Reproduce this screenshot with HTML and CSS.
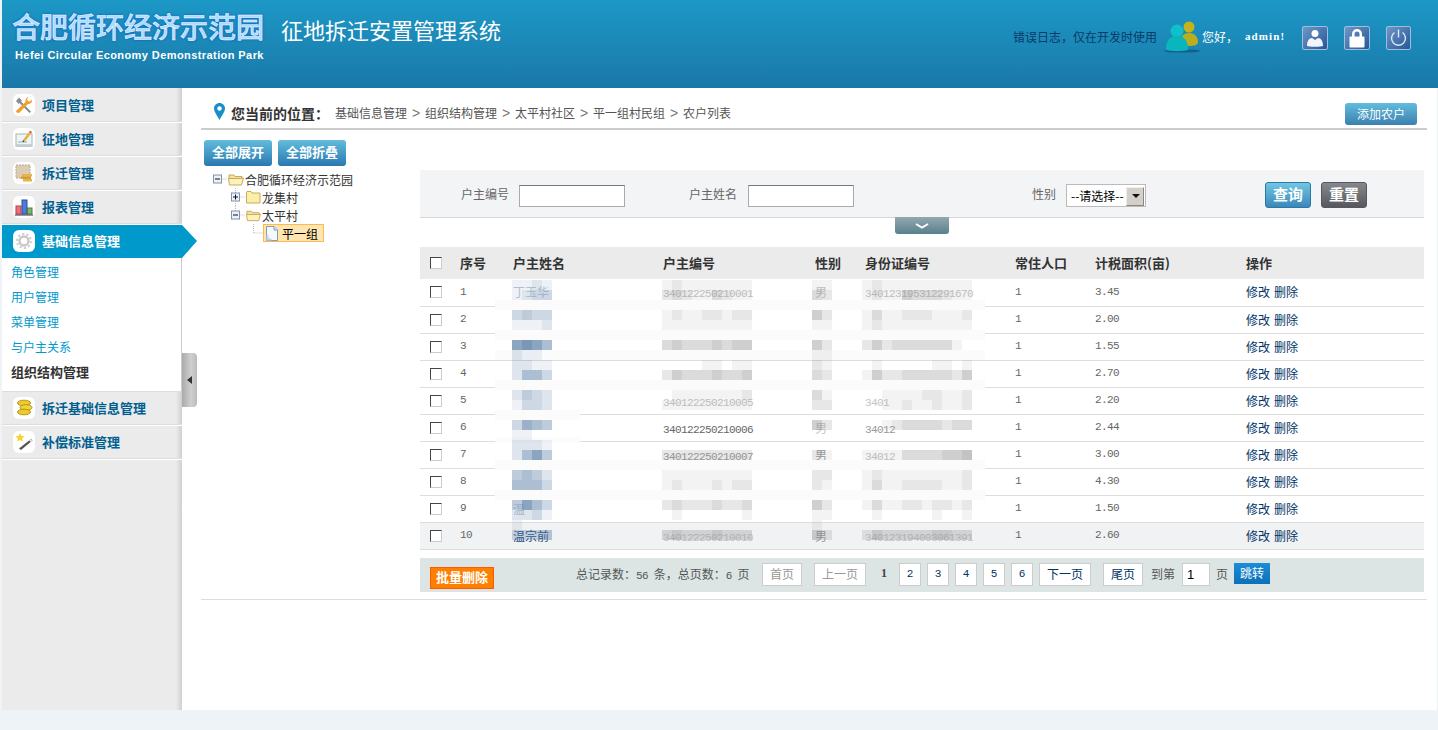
FILE: index.html
```html
<!DOCTYPE html>
<html>
<head>
    <meta charset="utf-8">
    <title>征地拆迁安置管理系统</title>
    <link rel="stylesheet" href="styles.css">
</head>
<body>
    <div class="header">
        <div class="logo">
            <div class="logo-cn">合肥循环经济示范园</div>
            <div class="logo-en">Hefei Circular Economy Demonstration Park</div>
        </div>
        <div class="sys-title">征地拆迁安置管理系统</div>
        <div class="user-bar">
            <span class="err-log">错误日志，仅在开发时使用</span>
            <svg class="avatar" width="37" height="36" viewBox="0 0 37 36">
                <ellipse cx="19" cy="32" rx="18" ry="1.6" fill="#11608a"/>
                <circle cx="26" cy="8" r="5.5" fill="#c4b41c"/>
                <path d="M17 25c0-7 3-11 9-11s9 4 9 9c0 3-4 4-9 4z" fill="#b8ae1f"/>
                <circle cx="14" cy="12" r="6.5" fill="#10c0c8"/>
                <path d="M3 31c0-10 4-14 11-14s11 4 11 14c-5 1.500-17 1.500-22 0z" fill="#0bb5bd"/>
            </svg>
            <span class="hello">您好，</span>
            <b class="uname">admin!</b>
            <a class="icon-btn">
                <svg width="24" height="22" viewBox="0 0 24 22"><circle cx="12" cy="6.500" r="3.500" fill="#fff"/><path d="M4 19c0-5 2-8 5-8l3 2 3-2c3 0 5 3 5 8-2 1-14 1-16 0z" fill="#f2f5fa"/></svg>
            </a>
            <a class="icon-btn">
                <svg width="24" height="22" viewBox="0 0 24 22"><path d="M7 10V7a5 5 0 0 1 10 0v3h-2.500V7a2.500 2.500 0 0 0-5 0v3z" fill="#fff"/><rect x="4.500" y="9.500" width="15" height="11" rx="1" fill="#fff"/></svg>
            </a>
            <a class="icon-btn power">
                <svg width="23" height="22" viewBox="0 0 23 22" fill="none" stroke="#dfe9f5" stroke-width="1.400"><path d="M7.500 5.500a7 7 0 1 0 8 0"/><path d="M11.500 2.500v8"/></svg>
            </a>
        </div>
    </div>

    <div class="layout">
        <div class="side">
            <div class="menu-item">
                <span class="menu-icon">
                    <svg width="18" height="18" viewBox="0 0 18 18"><path d="M4 1.500l3 3-1 1 10 10-1.500 1.500-10-10-1 1-2.500-3z" fill="#8a8f94"/><path d="M13.500 1l-1.500 2.500 1 1.500 2 .5L17 3.500c.5 3-2 5-4 4.500L4 17l-2.500-.5L1 15l9.500-9c-.5-2 1-5 3-5z" fill="#f0a030"/></svg>
                </span>项目管理
            </div>
            <div class="menu-item">
                <span class="menu-icon">
                    <svg width="18" height="18" viewBox="0 0 18 18"><rect x="1" y="4" width="16" height="11" fill="#eef3f4" stroke="#a8b4b8"/><path d="M3 12h9" stroke="#8fb2c4"/><path d="M1 15l-1 2h18l-1-2z" fill="#c4ccd0"/><path d="M8 10l6-8 2 1.500-6 8z" fill="#e8b33c"/><path d="M14 2l1-1.500 2 1.500-1 1.500z" fill="#d8504c"/><path d="M8 10l-.5 2 2-.5z" fill="#222"/></svg>
                </span>征地管理
            </div>
            <div class="menu-item">
                <span class="menu-icon">
                    <svg width="18" height="18" viewBox="0 0 18 18"><rect x="1" y="1" width="14" height="13" fill="#dcccb4" stroke="#b8a88e" stroke-dasharray="2 1"/><rect x="7" y="10" width="10" height="2.500" fill="#e6b44a"/><rect x="6" y="12.500" width="10" height="2.500" fill="#d69e30"/><rect x="8" y="15" width="9" height="2.500" fill="#e6b44a"/></svg>
                </span>拆迁管理
            </div>
            <div class="menu-item">
                <span class="menu-icon">
                    <svg width="18" height="18" viewBox="0 0 18 18"><rect x="1" y="8" width="5" height="8" fill="#ee7078" stroke="#b84048"/><rect x="7" y="2" width="5" height="14" fill="#4c7cd8" stroke="#2c4ca0"/><rect x="12.500" y="10" width="4.500" height="6" fill="#80b468" stroke="#4c8040"/><path d="M0 17h18" stroke="#333"/></svg>
                </span>报表管理
            </div>
            <div class="menu-item active">
                <span class="menu-icon">
                    <svg width="18" height="18" viewBox="0 0 18 18"><circle cx="9" cy="9" r="4.500" fill="none" stroke="#c8c8c8" stroke-width="2.500"/><circle cx="9" cy="9" r="7" fill="none" stroke="#d0d0d0" stroke-width="2" stroke-dasharray="2.300 2.100"/></svg>
                </span>基础信息管理
            </div>
            <div class="submenu">
                <a>角色管理</a>
                <a>用户管理</a>
                <a>菜单管理</a>
                <a>与户主关系</a>
                <a class="current">组织结构管理</a>
            </div>
            <div class="menu-item">
                <span class="menu-icon">
                    <svg width="18" height="18" viewBox="0 0 18 18"><ellipse cx="9" cy="4" rx="6.500" ry="2.800" fill="#eecb2c" stroke="#b89414"/><ellipse cx="11" cy="8.500" rx="6" ry="2.800" fill="#f2d436" stroke="#b89414"/><ellipse cx="9" cy="13" rx="6.500" ry="2.800" fill="#eecb2c" stroke="#b89414"/></svg>
                </span>拆迁基础信息管理
            </div>
            <div class="menu-item">
                <span class="menu-icon">
                    <svg width="18" height="18" viewBox="0 0 18 18"><path d="M5 0l1.300 3 3.200.3-2.400 2.100.7 3.100L5 6.900 2.200 8.500l.7-3.100L.5 3.300 3.700 3z" fill="#f6d22c"/><path d="M16 6l1.500 1.500L6 17l-2-1.500z" fill="#555"/><path d="M14 7.500l2 1.700 1.500-1.700L16 6z" fill="#ddd"/></svg>
                </span>补偿标准管理
            </div>
            <div class="side-handle"></div>
        </div>

        <div class="main">
            <div class="crumb-bar">
                <svg class="pin" width="11" height="17" viewBox="0 0 11 17"><path d="M5.500 0C2.500 0 0 2.400 0 5.500 0 9 3.500 13 5.500 17c2-4 5.500-8 5.500-11.500C11 2.400 8.500 0 5.500 0z" fill="#1a8ecb"/><circle cx="5.500" cy="5.500" r="2.200" fill="#fff"/></svg>
                <span class="crumb-label">您当前的位置：</span>
                <span class="crumbs">基础信息管理<i>&gt;</i>组织结构管理<i>&gt;</i>太平村社区<i>&gt;</i>平一组村民组<i>&gt;</i>农户列表</span>
                <a class="btn-add">添加农户</a>
            </div>

            <div class="content">
                <div class="tree-col">
                    <div class="tree-btns">
                        <a class="btn-blue">全部展开</a>
                        <a class="btn-blue">全部折叠</a>
                    </div>
                    <ul class="tree">
                        <li class="tree-row">
                            <svg width="18" height="18" viewBox="0 0 18 18"><path d="M13.500 9H19" stroke="#bbb" stroke-dasharray="1 1"/><rect x="4.500" y="5" width="8" height="8" fill="#eef1f5" stroke="#7d95b0"/><path d="M6 9h5" stroke="#111"/></svg>
                            <svg class="folder" width="16" height="14" viewBox="0 0 16 14"><path d="M1 3h5l1 1.500h7v2H1z" fill="#f4e2a0" stroke="#c9a85c"/><path d="M.5 6.500h12l3-.5-2 7H1.500z" fill="#fdf2bd" stroke="#c9a85c"/></svg>
                            <span>合肥循环经济示范园</span>
                        </li>
                        <li class="tree-row lv1">
                            <svg width="18" height="18" viewBox="0 0 18 18"><path d="M8.500 0v5M8.500 13v5" stroke="#bbb" stroke-dasharray="1 1"/><path d="M13.500 9H19" stroke="#bbb" stroke-dasharray="1 1"/><rect x="4.500" y="5" width="8" height="8" fill="#eef1f5" stroke="#7d95b0"/><path d="M6 9h5M8.500 6.500v5" stroke="#111"/></svg>
                            <svg class="folder" width="15" height="14" viewBox="0 0 15 14"><path d="M.5 2.500l.5-1h4l1 1.500h8v10H.5z" fill="#fbeea8" stroke="#c9a85c"/></svg>
                            <span>龙集村</span>
                        </li>
                        <li class="tree-row lv1">
                            <svg width="18" height="18" viewBox="0 0 18 18"><path d="M8.500 0v5" stroke="#bbb" stroke-dasharray="1 1"/><path d="M13.500 9H19" stroke="#bbb" stroke-dasharray="1 1"/><rect x="4.500" y="5" width="8" height="8" fill="#eef1f5" stroke="#7d95b0"/><path d="M6 9h5" stroke="#111"/></svg>
                            <svg class="folder" width="15" height="14" viewBox="0 0 16 14"><path d="M1 3h5l1 1.500h7v2H1z" fill="#f4e2a0" stroke="#c9a85c"/><path d="M.5 6.500h12l3-.5-2 7H1.500z" fill="#fdf2bd" stroke="#c9a85c"/></svg>
                            <span>太平村</span>
                        </li>
                        <li class="tree-row lv2">
                            <svg width="18" height="18" viewBox="0 0 18 18"><path d="M8.500 0v9H18" fill="none" stroke="#bbb" stroke-dasharray="1 1"/></svg>
                            <span class="leaf">
                                <svg width="12" height="15" viewBox="0 0 12 15"><path d="M.5.500h7.500l3.500 3.500v10.500H.5z" fill="#f6f9fd" stroke="#7f9cc4"/><path d="M8 .5v3.500h3.500" fill="#dbe6f4" stroke="#7f9cc4"/><path d="M1.500 9v4.500h4" fill="none" stroke="#c4d4ec" stroke-width="2"/></svg>
                                <span>平一组</span>
                            </span>
                        </li>
                    </ul>
                </div>

                <div class="list-col">
                    <div class="search-bar">
                        <label class="f1">户主编号</label>
                        <input class="txt" type="text">
                        <label class="f2">户主姓名</label>
                        <input class="txt" type="text">
                        <label class="f3">性别</label>
                        <span class="sel-wrap">
                            <select class="sel"><option>--请选择--</option><option>男</option><option>女</option></select>
                        </span>
                        <a class="btn-query">查询</a>
                        <a class="btn-reset">重置</a>
                    </div>
                    <a class="search-toggle">
                        <svg width="14" height="6" viewBox="0 0 14 6"><path d="M1 1l6 3.500 6-3.500" fill="none" stroke="#fff" stroke-width="2"/></svg>
                    </a>

                    <div class="table-wrap">
                        <table class="grid">
                            <colgroup>
                                <col class="c-check"><col class="c-no"><col class="c-name"><col class="c-code"><col class="c-sex"><col class="c-id"><col class="c-pop"><col class="c-area"><col class="c-op">
                            </colgroup>
                            <thead>
                                <tr>
                                    <th><input class="chk" type="checkbox"></th>
                                    <th>序号</th>
                                    <th>户主姓名</th>
                                    <th>户主编号</th>
                                    <th>性别</th>
                                    <th>身份证编号</th>
                                    <th>常住人口</th>
                                    <th>计税面积(亩)</th>
                                    <th>操作</th>
                                </tr>
                            </thead>
                            <tbody id="rows"></tbody>
                        </table>
                        <svg id="mosaic" class="mosaic" width="1004" height="302"></svg>
                    </div>

                    <div class="pager">
                        <a class="btn-batch">批量删除</a>
                        <span class="pager-info">总记录数：<em>56</em> 条，总页数：<em>6</em> 页</span>
                        <a class="pg off pg-first">首页</a>
                        <a class="pg off pg-prev">上一页</a>
                        <b class="pg-cur">1</b>
                        <a class="pg num">2</a>
                        <a class="pg num">3</a>
                        <a class="pg num">4</a>
                        <a class="pg num">5</a>
                        <a class="pg num">6</a>
                        <a class="pg pg-next">下一页</a>
                        <a class="pg pg-last">尾页</a>
                        <span class="pg-to">到第</span>
                        <input class="pg-input" type="text" value="1">
                        <span class="pg-unit">页</span>
                        <a class="pg-go">跳转</a>
                    </div>
                </div>
            </div>
        </div>
    </div>

    <script src="app.js"></script>
</body>
</html>
```

FILE: styles.css
```css
* {
    box-sizing: border-box;
}

body {
    margin: 0;
    padding-left: 2px;
    height: 730px;
    overflow: hidden;
    background-color: #eef3f8;
    font-family: "Noto Sans CJK SC", "Liberation Sans", sans-serif;
    font-size: 12px;
    color: #555;
}

a {
    cursor: pointer;
}

/* header */
.header {
    display: flex;
    height: 88px;
    background: linear-gradient(to bottom, #1c98c6, #1a78a8);
    color: #fff;
}

.logo {
    width: 279px;
    padding: 8px 0 0 10px;
}

.logo-cn {
    font-size: 28px;
    font-weight: 500;
    line-height: 36px;
    color: #a6dcff;
    -webkit-text-stroke: 0.5px #fff;
    text-shadow: 0 0 3px #0f5fc8, 0 0 2px #0f5fc8;
    white-space: nowrap;
}

.logo-en {
    margin-top: 3px;
    padding-left: 3px;
    font-family: "Liberation Sans", sans-serif;
    font-size: 11px;
    font-weight: bold;
    letter-spacing: 0.42px;
    line-height: 16px;
    white-space: nowrap;
}

.sys-title {
    padding-top: 14px;
    font-size: 22px;
    line-height: 30px;
    white-space: nowrap;
}

.user-bar {
    display: flex;
    align-items: center;
    height: 36px;
    margin: 18px 27px 0 auto;
}

.err-log {
    width: 150px;
    color: #0a3a68;
}

.avatar {
    display: block;
    margin-right: 2px;
    margin-top: 2px;
}

.hello {
    width: 43px;
}

.uname {
    width: 57px;
    font-family: "Liberation Serif", serif;
    font-size: 11px;
    letter-spacing: 1.1px;
}

.icon-btn {
    display: block;
    width: 26px;
    height: 24px;
    margin-right: 16px;
    margin-top: 4px;
    border: 1px solid #9cc0dc;
    border-radius: 2px;
    background: linear-gradient(135deg, #6f97c6, #26579a);
}

.icon-btn svg {
    display: block;
}

.icon-btn.power {
    width: 25px;
    margin-right: 0;
}

/* page frame */
.layout {
    display: flex;
    height: 622px;
}

.side {
    position: relative;
    width: 180px;
    padding-top: 1px;
    background: linear-gradient(to right, #ebebeb 174px, #cfcfcf 180px);
}

.menu-item {
    display: flex;
    align-items: flex-start;
    height: 34px;
    padding: 5px 0 0 11px;
    border-bottom: 1px solid #fff;
    box-shadow: inset 0 -1px 0 #dcdcdc;
    font-size: 13px;
    font-weight: bold;
    line-height: 22px;
    color: #005f8f;
}

.menu-icon {
    display: block;
    width: 22px;
    height: 22px;
    margin-right: 7px;
    padding: 2px;
    border-radius: 6px;
    background-color: #fff;
}

.menu-icon svg {
    display: block;
}

.menu-item.active {
    position: relative;
    height: 33px;
    padding-top: 5px;
    border: 0;
    box-shadow: none;
    background-color: #0099cc;
    color: #fff;
}

.menu-item.active::after {
    content: "";
    position: absolute;
    top: 0;
    left: 180px;
    border-top: 16px solid transparent;
    border-bottom: 17px solid transparent;
    border-left: 15px solid #0099cc;
}

.submenu {
    height: 134px;
    padding-top: 2px;
    border-right: 1px solid #ccc;
    border-bottom: 1px solid #ddd;
    background-color: #fff;
}

.submenu a {
    display: block;
    height: 25px;
    padding-left: 9px;
    line-height: 23px;
    color: #0099cc;
}

.submenu a.current {
    font-size: 13px;
    font-weight: bold;
    color: #333;
}

.side-handle {
    position: absolute;
    top: 265px;
    left: 180px;
    width: 15px;
    height: 54px;
    border-radius: 0 4px 4px 0;
    background: linear-gradient(to right, #aaa, #cfcfcf 60%, #bbb);
}

.side-handle::after {
    content: "";
    position: absolute;
    top: 23px;
    left: 5px;
    border-top: 4px solid transparent;
    border-bottom: 4px solid transparent;
    border-right: 5px solid #333;
}

.main {
    flex: 1;
    margin-right: 1px;
    padding: 0 10px 0 19px;
    background-color: #fff;
}

/* breadcrumb */
.crumb-bar {
    display: flex;
    align-items: center;
    height: 42px;
    padding: 9px 10px 0 13px;
    border-bottom: 2px solid #ccc;
}

.pin {
    margin-right: 6px;
    margin-top: -2px;
}

.crumb-label {
    width: 104px;
    font-size: 14px;
    font-weight: bold;
    color: #333;
}

.crumbs {
    color: #555;
    white-space: nowrap;
}

.crumbs i {
    display: inline-block;
    width: 18px;
    font-size: 14px;
    font-weight: 300;
    font-style: normal;
    font-family: "Liberation Sans", sans-serif;
    line-height: 14px;
    text-align: center;
    color: #777;
}

.btn-add {
    width: 72px;
    height: 22px;
    margin: 3px 0 0 auto;
    border-radius: 3px;
    background: linear-gradient(to bottom, #62bcdc, #3c80b0);
    line-height: 22px;
    text-align: center;
    color: #fff;
}

.content {
    display: flex;
    height: 470px;
    border-bottom: 1px solid #ddd;
}

/* tree */
.tree-col {
    width: 219px;
    padding: 10px 0 0 3px;
}

.tree-btns {
    display: flex;
    gap: 6px;
}

.btn-blue {
    width: 68px;
    height: 26px;
    border-radius: 3px;
    background: linear-gradient(to bottom, #62bcdc, #2a78b0);
    font-size: 13px;
    font-weight: bold;
    line-height: 24px;
    text-align: center;
    color: #fff;
}

.tree {
    margin: 4px 0 0 5px;
    padding: 0;
    list-style: none;
}

.tree-row {
    display: flex;
    align-items: center;
    height: 18px;
    color: #333;
    white-space: nowrap;
}

.tree-row.lv1 {
    padding-left: 18px;
}

.tree-row.lv2 {
    padding-left: 36px;
}

.tree-row svg {
    display: block;
    flex: none;
}

.folder {
    margin: 0 1px 0 1px;
}

.leaf {
    display: flex;
    align-items: center;
    width: 61px;
    height: 18px;
    margin-left: 0;
    padding-left: 2px;
    border: 1px solid #ffb951;
    background-color: #ffe6b0;
    color: #000;
}

.leaf span {
    margin-left: 4px;
}

/* search panel */
.list-col {
    width: 1004px;
    padding-top: 40px;
}

.search-bar {
    display: flex;
    align-items: center;
    height: 48px;
    padding-left: 41px;
    border-bottom: 1px solid #d8d8d8;
    background-color: #f3f4f6;
    color: #666;
}

.search-bar label {
    white-space: nowrap;
}

.txt {
    width: 106px;
    height: 22px;
    margin-top: 4px;
    border: 1px solid #aaa;
    border-top-color: #777;
    background-color: #fff;
}

.f1 {
    width: 58px;
}

.f2 {
    width: 59px;
    margin-left: 64px;
}

.f3 {
    width: 34px;
    margin-left: 178px;
}

.sel-wrap {
    position: relative;
    display: block;
    width: 80px;
    height: 23px;
    margin-top: 4px;
}

.sel-wrap::after {
    content: "";
    position: absolute;
    top: 3px;
    right: 2px;
    width: 16px;
    height: 17px;
    border: 1px solid #888;
    border-top-color: #eee;
    border-left-color: #eee;
    background-color: #d4d0c8;
}

.sel-wrap::before {
    content: "";
    position: absolute;
    z-index: 1;
    top: 10px;
    right: 6px;
    border-top: 4px solid #111;
    border-left: 4px solid transparent;
    border-right: 4px solid transparent;
}

.sel {
    display: block;
    width: 100%;
    height: 100%;
    padding: 0 0 0 4px;
    appearance: none;
    border: 1px solid #bbb;
    border-radius: 0;
    background-color: #fff;
    font: inherit;
    color: #000;
}

.btn-query,
.btn-reset {
    width: 46px;
    height: 26px;
    border-radius: 3px;
    font-size: 15px;
    font-weight: bold;
    line-height: 22px;
    text-align: center;
    color: #fff;
}

.btn-query {
    margin-left: 119px;
    margin-top: 3px;
    border: 1px solid #2a78a8;
    background: linear-gradient(to bottom, #72c6e2, #3a88ba);
}

.btn-reset {
    margin-left: 10px;
    margin-top: 3px;
    border: 1px solid #55585c;
    background: linear-gradient(to bottom, #85888c, #55585c);
}

.search-toggle {
    display: flex;
    align-items: center;
    justify-content: center;
    width: 54px;
    height: 17px;
    margin: -1px 0 13px 475px;
    border-radius: 0 0 3px 3px;
    background: linear-gradient(to bottom, #94a8ae, #58808e);
}

/* table */
.table-wrap {
    position: relative;
}

.grid {
    width: 100%;
    table-layout: fixed;
    border-collapse: collapse;
}

.c-check { width: 40px; }
.c-no { width: 53px; }
.c-name { width: 150px; }
.c-code { width: 152px; }
.c-sex { width: 50px; }
.c-id { width: 150px; }
.c-pop { width: 80px; }
.c-area { width: 151px; }

.grid th {
    height: 32px;
    padding: 0 0 2px;
    background-color: #ebebeb;
    font-size: 13px;
    font-weight: bold;
    text-align: left;
    color: #333;
}

.grid td {
    height: 27px;
    padding: 0;
    border-bottom: 1px solid #ddd;
    color: #666;
    white-space: nowrap;
}

.grid td + td {
    padding-bottom: 1px;
}

.grid th:first-child,
.grid td:first-child {
    padding: 0 0 0 10px;
}

.grid tr.hover td {
    background-color: #f1f2f4;
}

.chk {
    display: block;
    width: 12px;
    height: 12px;
    margin: 0;
    appearance: none;
    border: 1px solid #ccc;
    border-top-color: #444;
    border-left-color: #444;
    background-color: #fff;
}

.num {
    font-family: "Liberation Mono", monospace;
    font-size: 11px;
    letter-spacing: -0.6px;
}

.name-txt {
    color: #1f4a7c;
}

.faint-name {
    color: #bcc8d6;
}

.faint {
    color: #c4c4c4;
}

.mid {
    color: #999;
}

.grid td a {
    margin-right: 4px;
    color: #003366;
}

.mosaic {
    position: absolute;
    top: 0;
    left: 0;
    pointer-events: none;
}

/* pager */
.pager {
    display: flex;
    align-items: center;
    height: 34px;
    margin-top: 8px;
    padding-left: 10px;
    background-color: #dce5e4;
    color: #555;
}

.btn-batch {
    width: 64px;
    height: 22px;
    margin-top: 6px;
    border: 1px solid #ff5a00;
    background-color: #ff8000;
    font-size: 13px;
    font-weight: bold;
    line-height: 18px;
    text-align: center;
    color: #fff;
}

.pager-info {
    width: 186px;
    margin-left: 82px;
    margin-top: -3px;
    white-space: nowrap;
}

.pager-info em {
    margin-right: 3px;
    font-family: "Liberation Mono", monospace;
    font-size: 11px;
    font-style: normal;
    letter-spacing: -0.6px;
}

.pg {
    display: block;
    height: 23px;
    margin-top: -1px;
    margin-right: 6px;
    border: 1px solid #ccc;
    background-color: #fff;
    line-height: 20px;
    text-align: center;
    color: #003366;
}

.pg.off {
    color: #999;
}

.pg.num {
    width: 22px;
    letter-spacing: 0;
}

.pg-first {
    width: 40px;
    margin-right: 12px;
}

.pg-prev {
    width: 52px;
    margin-right: 15px;
}

.pg-cur {
    width: 18px;
    margin-top: -2px;
    font-family: "Liberation Serif", serif;
    color: #444;
}

.pg-next {
    width: 52px;
    margin-right: 12px;
}

.pg-last {
    width: 40px;
    margin-right: 8px;
}

.pg-to {
    width: 31px;
    margin-top: -3px;
}

.pg-input {
    width: 28px;
    height: 23px;
    margin-top: -1px;
    padding: 0 0 0 4px;
    border: 1px solid #ccc;
    font-family: "Liberation Sans", sans-serif;
    font-size: 13px;
    color: #000;
}

.pg-unit {
    width: 24px;
    margin-top: -3px;
    padding-left: 6px;
}

.pg-go {
    width: 36px;
    height: 21px;
    margin-top: -3px;
    background: linear-gradient(to bottom, #1a8ed6, #0c70b8);
    line-height: 19px;
    text-align: center;
    color: #fff;
}
```

FILE: app.js
```js
// rows of the list; hidden values stay blank under the mosaic
const rows = [
    { name: ['丁玉华', 'faint-name'], code: ['340122250210001', 'faint'], sex: ['男', 'faint'], id: ['340123195312291670', 'faint'], area: '3.45' },
    { area: '2.00' },
    { area: '1.55' },
    { area: '2.70' },
    { code: ['340122250210005', 'faint'], id: ['3401', 'faint'], area: '2.20' },
    { code: ['340122250210006', ''], sex: ['男', 'faint'], id: ['34012', 'mid'], area: '2.44' },
    { code: ['340122250210007', 'mid'], sex: ['男', 'mid'], id: ['34012', 'faint'], area: '3.00' },
    { area: '4.30' },
    { name: ['温', 'faint-name'], area: '1.50' },
    { name: ['温宗前', 'name-txt'], code: ['340122250210010', 'faint'], sex: ['男', 'mid'], id: ['340123194003061391', 'faint'], area: '2.60', hover: true }
];

const tbody = document.getElementById('rows');

function cellText(pair, isNum) {
    if (!pair) return '';
    return `<span class="${isNum ? 'num ' : ''}${pair[1]}">${pair[0]}</span>`;
}

rows.forEach((row, i) => {
    const tr = document.createElement('tr');
    if (row.hover) tr.className = 'hover';
    tr.innerHTML = `
        <td><input class="chk" type="checkbox"></td>
        <td class="num">${i + 1}</td>
        <td>${cellText(row.name)}</td>
        <td>${cellText(row.code, true)}</td>
        <td>${cellText(row.sex)}</td>
        <td>${cellText(row.id, true)}</td>
        <td class="num">1</td>
        <td class="num">${row.area}</td>
        <td><a>修改</a><a>删除</a></td>`;
    tbody.appendChild(tr);
});

// mosaic blocks sit on a 10px grid of the page; y values are page coordinates
const blocks = {
    name: { x: 512, color: '90,125,165', cells: {
        280: '1121', 290: '1233', 310: '3433', 320: '1112', 340: '7875', 350: '2110',
        360: '2211', 370: '2553', 390: '2432', 400: '1332', 420: '3654', 430: '1100',
        440: '2221', 450: '2574', 470: '4542', 480: '5553', 500: '4753', 510: '2231',
        520: '1000', 530: '3334'
    } },
    code: { x: 662, color: '136,136,136', cells: {
        280: '121111111', 290: '232113211', 310: '121122122', 320: '111111111',
        340: '343334344', 360: '000011011', 370: '243334334', 390: '011111112',
        400: '111111111', 450: '222222222', 470: '111111111', 480: '121112122',
        500: '232223223', 510: '010000001', 530: '343334333'
    } },
    sex: { x: 812, color: '136,136,136', cells: {
        280: '11', 290: '32', 310: '42', 320: '11', 340: '42', 350: '11', 360: '21', 370: '32',
        390: '31', 400: '22', 420: '42', 450: '21', 470: '22', 480: '21', 500: '42', 510: '11',
        520: '10', 530: '42'
    } },
    id: { x: 862, color: '136,136,136', cells: {
        280: '12111111111', 290: '12114333211', 310: '13112221112', 320: '12111111111',
        340: '24233333310', 360: '01000001101', 370: '14223333324', 390: '00111122112',
        400: '00112112112', 420: '00123333233', 450: '11113333445', 470: '12111111112',
        480: '13112222112', 500: '13112212212', 510: '01000001001', 530: '24333334433'
    } }
};

// pale smears left where the blur brushed over the row lines
const bands = [[300, 310], [330, 340], [350, 360], [380, 390], [460, 470], [490, 500]];

const TOP = 247;
const LEFT = 420;
let svg = '';

bands.forEach(([a, b]) => {
    svg += `<rect x="75" y="${a - TOP}" width="490" height="${b - a}" fill="#fbfbfb"/>`;
});
svg += `<rect x="75" y="${410 - TOP}" width="85" height="10" fill="#fbfbfb"/>`;
svg += `<rect x="75" y="${437 - TOP}" width="85" height="6" fill="#fbfbfb"/>`;

Object.values(blocks).forEach((block) => {
    Object.entries(block.cells).forEach(([y, values]) => {
        [...values].forEach((v, i) => {
            if (v === '0') return;
            const x = block.x + i * 10 - LEFT;
            svg += `<rect x="${x}" y="${y - TOP}" width="10" height="10" fill="rgba(${block.color},${v / 10})"/>`;
        });
    });
});

document.getElementById('mosaic').innerHTML = svg;
```
